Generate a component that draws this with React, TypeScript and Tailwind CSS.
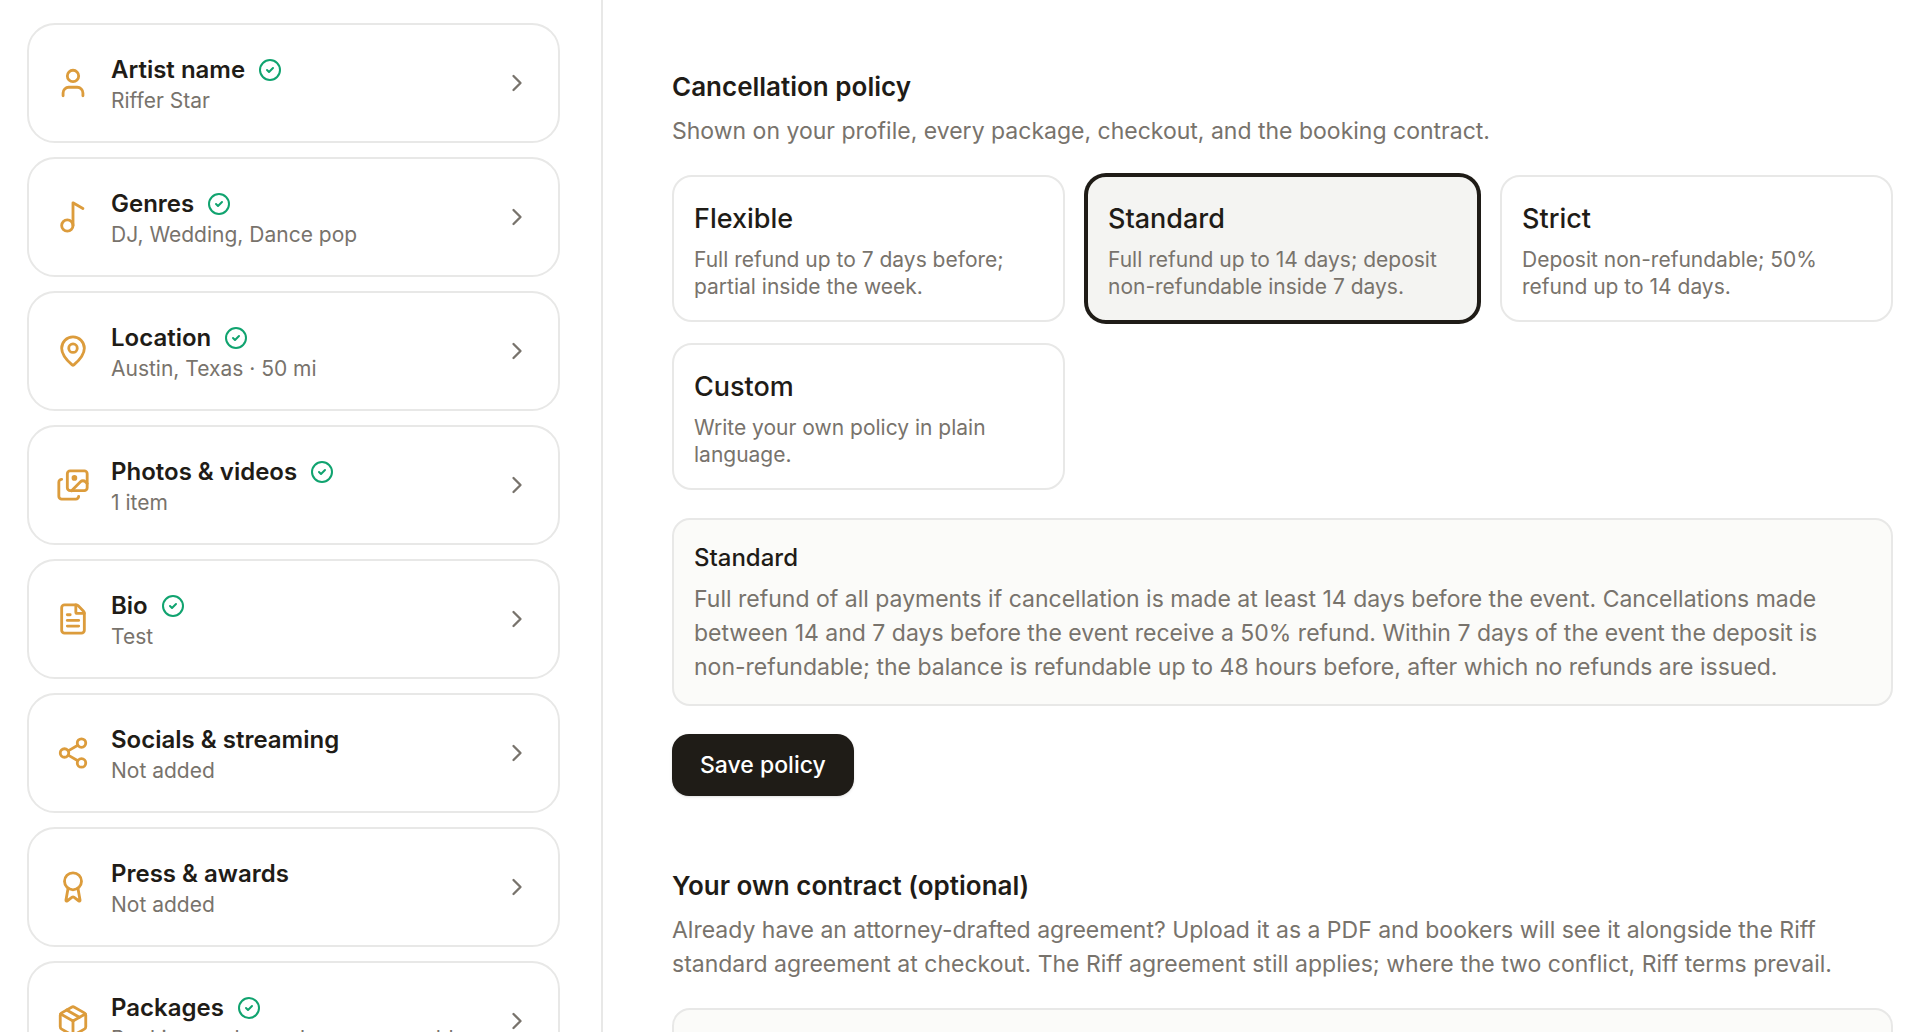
import React, { useState } from 'react';
import {
  Award,
  ChevronRight,
  CircleCheck,
  FileText,
  Images,
  LucideIcon,
  MapPin,
  Music2,
  Package,
  Share2,
  User,
} from 'lucide-react';

interface Section {
  icon: LucideIcon;
  title: string;
  summary: string;
  done: boolean;
}

interface Policy {
  id: string;
  name: string;
  summary: string;
  full: string;
}

const sections: Section[] = [
  { icon: User, title: 'Artist name', summary: 'Riffer Star', done: true },
  { icon: Music2, title: 'Genres', summary: 'DJ, Wedding, Dance pop', done: true },
  { icon: MapPin, title: 'Location', summary: 'Austin, Texas · 50 mi', done: true },
  { icon: Images, title: 'Photos & videos', summary: '1 item', done: true },
  { icon: FileText, title: 'Bio', summary: 'Test', done: true },
  { icon: Share2, title: 'Socials & streaming', summary: 'Not added', done: false },
  { icon: Award, title: 'Press & awards', summary: 'Not added', done: false },
  { icon: Package, title: 'Packages', summary: 'Booking packages buyers can add', done: true },
];

const policies: Policy[] = [
  {
    id: 'flexible',
    name: 'Flexible',
    summary: 'Full refund up to 7 days before; partial inside the week.',
    full: 'Full refund of all payments up to 7 days before the event.',
  },
  {
    id: 'standard',
    name: 'Standard',
    summary: 'Full refund up to 14 days; deposit non-refundable inside 7 days.',
    full: 'Full refund of all payments if cancellation is made at least 14 days before the event. Cancellations made between 14 and 7 days before the event receive a 50% refund. Within 7 days of the event the deposit is non-refundable; the balance is refundable up to 48 hours before, after which no refunds are issued.',
  },
  {
    id: 'strict',
    name: 'Strict',
    summary: 'Deposit non-refundable; 50% refund up to 14 days.',
    full: 'The deposit is non-refundable. 50% of the balance is refunded up to 14 days before the event.',
  },
  {
    id: 'custom',
    name: 'Custom',
    summary: 'Write your own policy in plain language.',
    full: 'Write your own policy in plain language.',
  },
];

const SectionCard: React.FC<{ section: Section }> = ({ section }) => {
  const Icon = section.icon;
  return (
    <button
      type="button"
      className="flex h-[120px] w-full shrink-0 items-center gap-[21px] rounded-[28px] border-2 border-[#e8e8e7] bg-white px-[27px] text-left"
    >
      <Icon size={34} strokeWidth={2} className="shrink-0 text-[#dc9c3c]" />
      <span className="min-w-0 flex-1 pt-[3px]">
        <span className="flex items-center gap-[13px] text-[24px] leading-8 font-semibold text-[#1f1c17]">
          {section.title}
          {section.done && <CircleCheck size={24} strokeWidth={2} className="text-[#10a36f]" />}
        </span>
        <span className="block truncate text-[21px] leading-[30px] text-[#78736c]">{section.summary}</span>
      </span>
      <ChevronRight size={28} strokeWidth={2} className="shrink-0 text-[#78736c]" />
    </button>
  );
};

const App: React.FC = () => {
  const [selected, setSelected] = useState('standard');
  const active = policies.find(p => p.id === selected) as Policy;

  return (
    <div className="flex h-screen overflow-hidden bg-white font-['Inter','Liberation_Sans',sans-serif] text-[#1f1c17]">
      <nav className="flex w-[603px] shrink-0 flex-col gap-[14px] overflow-hidden border-r-2 border-[#e8e8e7] pt-[23px] pr-[41px] pl-[27px]">
        {sections.map(section => (
          <SectionCard key={section.title} section={section} />
        ))}
      </nav>

      <main className="min-w-0 flex-1 overflow-hidden pt-[69px] pr-[27px] pl-[69px]">
        <section>
          <h2 className="text-[26px] leading-9 font-semibold">Cancellation policy</h2>
          <p className="mt-[9px] text-[23px] leading-[34px] text-[#78736c]">
            Shown on your profile, every package, checkout, and the booking contract.
          </p>

          <div className="mt-[27px] grid grid-cols-3 gap-[21px]">
            {policies.map(policy => (
              <button
                key={policy.id}
                type="button"
                aria-pressed={policy.id === selected}
                onClick={() => setSelected(policy.id)}
                className={`flex h-[147px] flex-col rounded-[20px] border-2 px-5 pt-6 text-left ${
                  policy.id === selected
                    ? 'border-[#1f1c17] bg-[#f4f4f2] ring-2 ring-[#1f1c17]'
                    : 'border-[#e8e8e7] bg-white'
                }`}
              >
                <span className="text-[27px] leading-9 font-medium">{policy.name}</span>
                <span className="mt-[9px] text-[21px] leading-[27px] text-[#78736c]">{policy.summary}</span>
              </button>
            ))}
          </div>

          <div className="mt-7 rounded-[18px] border-2 border-[#e8e8e7] bg-[#fbfbf9] px-5 pt-[21px] pb-5">
            <h3 className="text-[24px] leading-[34px] font-medium">{active.name}</h3>
            <p className="mt-[7px] text-[23px] leading-[34px] text-[#78736c]">{active.full}</p>
          </div>

          <button
            type="button"
            className="mt-7 h-[62px] rounded-[17px] bg-[#1f1c17] px-7 text-[23px] leading-[34px] font-medium text-white shadow-sm"
          >
            Save policy
          </button>
        </section>

        <section className="mt-[72px]">
          <h2 className="text-[26px] leading-9 font-semibold">Your own contract (optional)</h2>
          <p className="mt-[9px] text-[23px] leading-[34px] text-[#78736c]">
            Already have an attorney-drafted agreement? Upload it as a PDF and bookers will see it alongside the Riff
            standard agreement at checkout. The Riff agreement still applies; where the two conflict, Riff terms prevail.
          </p>
          <div className="mt-[27px] h-[120px] rounded-[18px] border-2 border-[#e8e8e7] bg-[#fbfbf9]" />
        </section>
      </main>
    </div>
  );
};

export default App;
